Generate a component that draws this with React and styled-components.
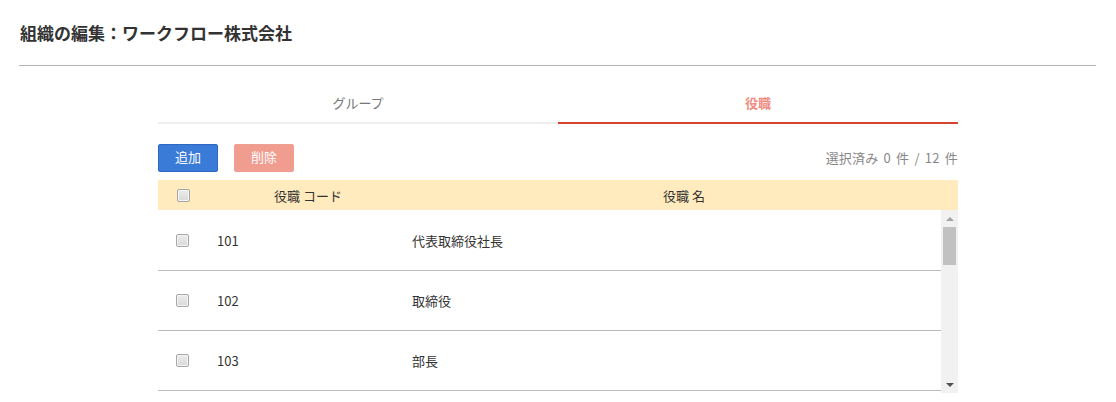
import React from "react";
import styled, { createGlobalStyle } from "styled-components";

const GlobalStyle = createGlobalStyle`
  html, body { margin: 0; padding: 0; background: #fff; }
  body {
    font-family: "Noto Sans CJK JP", "Noto Sans", sans-serif;
    color: #333;
    font-size: 13px;
  }
  * { box-sizing: border-box; }
`;

const Page = styled.div`
  width: 1116px;
  height: 402px;
  overflow: hidden;
`;

const PageHeader = styled.header`
  margin: 0 20px 0 19px;
  padding: 20px 0 20px 1px;
  border-bottom: 1px solid #b4b4b4;
`;

const Title = styled.h1`
  margin: 0;
  font-size: 17px;
  line-height: 25px;
  font-weight: 700;
  color: #333;
`;

const Main = styled.main`
  width: 800px;
  margin: 19px auto 0;
`;

const Tabs = styled.nav`
  display: flex;
`;

const Tab = styled.div`
  flex: 1;
  height: 39px;
  display: flex;
  align-items: center;
  justify-content: center;
  padding-bottom: 2px;
  font-size: 13px;
  border-bottom: 2px solid ${(p) => (p.$active ? "#d9432e" : "#eeeeee")};
  color: ${(p) => (p.$active ? "#ef8d80" : "#777")};
  font-weight: ${(p) => (p.$active ? 700 : 400)};
`;

const Toolbar = styled.div`
  display: flex;
  align-items: center;
  gap: 16px;
  margin-top: 20px;
  margin-bottom: 8px;
  height: 28px;
`;

const Button = styled.button`
  width: 60px;
  height: 28px;
  border-radius: 2px;
  border: 1px solid ${(p) => (p.$variant === "danger" ? "#efa093" : "#2f68c2")};
  background: ${(p) => (p.$variant === "danger" ? "#f09c8f" : "#3a7bd8")};
  color: #fff;
  font-family: inherit;
  font-size: 13px;
  padding: 0 0 3px;
  cursor: pointer;
`;

const Counter = styled.div`
  margin-left: auto;
  color: #888;
  font-size: 13px;
  word-spacing: 2px;
  letter-spacing: 0.2px;
  padding-bottom: 1px;
`;

const HeaderRow = styled.div`
  display: grid;
  grid-template-columns: 48px 204px 1fr;
  height: 30px;
  align-items: center;
  background: #ffebbd;
  color: #333;
`;

const HeadCell = styled.div`
  display: flex;
  justify-content: center;
  align-items: center;
`;

const Check = styled.input.attrs({ type: "checkbox" })`
  appearance: none;
  -webkit-appearance: none;
  margin: 0;
  width: 13px;
  height: 13px;
  border: 1px solid #a6a6a6;
  border-radius: 2px;
  background: linear-gradient(#ececec, #d9d9d9);
  box-shadow: inset 0 0 0 1px #f4f4f4;
  transform: translateX(${(p) => p.$shift || 0}px);
`;

const Body = styled.div`
  display: flex;
  height: 183px;
`;

const Rows = styled.div`
  flex: 1;
  overflow: hidden;
  padding-top: 1px;
`;

const Row = styled.div`
  display: grid;
  grid-template-columns: 48px 204px 1fr;
  height: 60px;
  align-items: center;
  border-bottom: 1px solid #bbbbbb;
`;

const CheckCell = styled.div`
  display: flex;
  justify-content: center;
`;

const CodeCell = styled.div`
  padding-left: 11px;
`;

const NameCell = styled.div`
  padding-left: 2px;
`;

const Scrollbar = styled.div`
  width: 17px;
  display: flex;
  flex-direction: column;
  background: #f1f1f1;
`;

const ScrollButton = styled.div`
  height: 17px;
  display: flex;
  align-items: center;
  justify-content: center;

  &::before {
    content: "";
    width: 0;
    height: 0;
    border-left: 4px solid transparent;
    border-right: 4px solid transparent;
    ${(p) =>
      p.$dir === "up"
        ? "border-bottom: 4px solid #a3a3a3;"
        : "border-top: 4px solid #505050;"}
  }
`;

const Track = styled.div`
  flex: 1;
  padding: 0 2px;
`;

const Thumb = styled.div`
  background: #c1c1c1;
`;

const roles = [
  ["101", "代表取締役社長"],
  ["102", "取締役"],
  ["103", "部長"],
  ["104", "次長"],
  ["105", "課長"],
  ["106", "係長"],
  ["107", "主任"],
  ["108", "一般社員"],
  ["109", "契約社員"],
  ["110", "派遣社員"],
  ["111", "パート"],
  ["112", "アルバイト"],
];

const VISIBLE = 3;
const VIEW_HEIGHT = 183;
const ROW_HEIGHT = 60;

export default function App() {
  const trackLen = VIEW_HEIGHT - 34;
  const thumbLen = Math.round((trackLen * VIEW_HEIGHT) / (roles.length * ROW_HEIGHT));
  return (
    <Page>
      <GlobalStyle />
      <PageHeader>
        <Title>組織の編集：ワークフロー株式会社</Title>
      </PageHeader>
      <Main>
        <Tabs>
          <Tab>グループ</Tab>
          <Tab $active>役職</Tab>
        </Tabs>
        <Toolbar>
          <Button>追加</Button>
          <Button $variant="danger">削除</Button>
          <Counter>選択済み 0 件 / {roles.length} 件</Counter>
        </Toolbar>
        <HeaderRow>
          <HeadCell>
            <Check $shift={1} />
          </HeadCell>
          <HeadCell>役職 コード</HeadCell>
          <HeadCell>役職 名</HeadCell>
        </HeaderRow>
        <Body>
          <Rows>
            {roles.slice(0, VISIBLE).map(([code, name]) => (
              <Row key={code}>
                <CheckCell>
                  <Check />
                </CheckCell>
                <CodeCell>{code}</CodeCell>
                <NameCell>{name}</NameCell>
              </Row>
            ))}
          </Rows>
          <Scrollbar>
            <ScrollButton $dir="up" />
            <Track>
              <Thumb style={{ height: thumbLen }} />
            </Track>
            <ScrollButton $dir="down" />
          </Scrollbar>
        </Body>
      </Main>
    </Page>
  );
}
